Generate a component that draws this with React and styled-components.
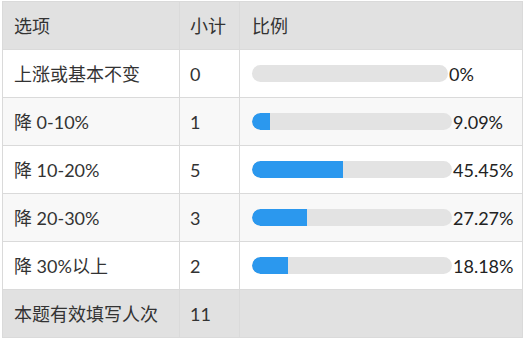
import React from 'react';
import styled, { createGlobalStyle } from 'styled-components';

const GlobalStyle = createGlobalStyle`
  html, body {
    margin: 0;
    padding: 0;
    background: #fff;
  }
  body {
    font-family: Lato, "Noto Sans CJK SC", sans-serif;
    color: #333;
  }
`;

const Page = styled.div`
  padding: 1px 0 0 2px;
`;

const Table = styled.table`
  border-collapse: collapse;
  width: 521px;
  table-layout: fixed;
  font-size: 18px;
`;

const HeadRow = styled.tr`
  background: #e1e1e1;
`;

const Row = styled.tr`
  background: ${(p) => (p.$striped ? '#f8f8f8' : '#fff')};
`;

const FootRow = styled.tr`
  background: #e1e1e1;
`;

const Cell = styled.td`
  height: 47px;
  padding: 0 0 0 ${(p) => p.$pad || 11}px;
  border: 1px solid #dadada;
  vertical-align: middle;
  white-space: nowrap;
  line-height: 22px;
`;

const BarWrap = styled.div`
  display: flex;
  align-items: center;
`;

const Track = styled.div`
  width: ${(p) => p.$w}px;
  height: 17px;
  border-radius: 9px;
  background: #e3e3e3;
  overflow: hidden;
`;

const Fill = styled.div`
  height: 100%;
  background: #2b98ee;
  border-radius: 9px 0 0 9px;
`;

const Pct = styled.span`
  margin-left: 1px;
  color: #222;
`;

const rows = [
  { label: '上涨或基本不变', count: 0, pct: 0 },
  { label: '降 0-10%', count: 1, pct: 9.09 },
  { label: '降 10-20%', count: 5, pct: 45.45 },
  { label: '降 20-30%', count: 3, pct: 27.27 },
  { label: '降 30%以上', count: 2, pct: 18.18 },
];

export default function App() {
  return (
    <Page>
      <GlobalStyle />
      <Table>
        <colgroup>
          <col style={{ width: 177 }} />
          <col style={{ width: 60 }} />
          <col />
        </colgroup>
        <tbody>
          <HeadRow>
            <Cell>选项</Cell>
            <Cell $pad={10}>小计</Cell>
            <Cell $pad={12}>比例</Cell>
          </HeadRow>
          {rows.map((r, i) => (
            <Row key={r.label} $striped={i % 2 === 1}>
              <Cell>{r.label}</Cell>
              <Cell $pad={10}>{r.count}</Cell>
              <Cell $pad={12}>
                <BarWrap>
                  <Track $w={r.pct === 0 ? 196 : 200}>
                    <Fill style={{ width: `${r.pct}%` }} />
                  </Track>
                  <Pct>{r.pct === 0 ? '0%' : `${r.pct.toFixed(2)}%`}</Pct>
                </BarWrap>
              </Cell>
            </Row>
          ))}
          <FootRow>
            <Cell>本题有效填写人次</Cell>
            <Cell $pad={10}>11</Cell>
            <Cell />
          </FootRow>
        </tbody>
      </Table>
    </Page>
  );
}
